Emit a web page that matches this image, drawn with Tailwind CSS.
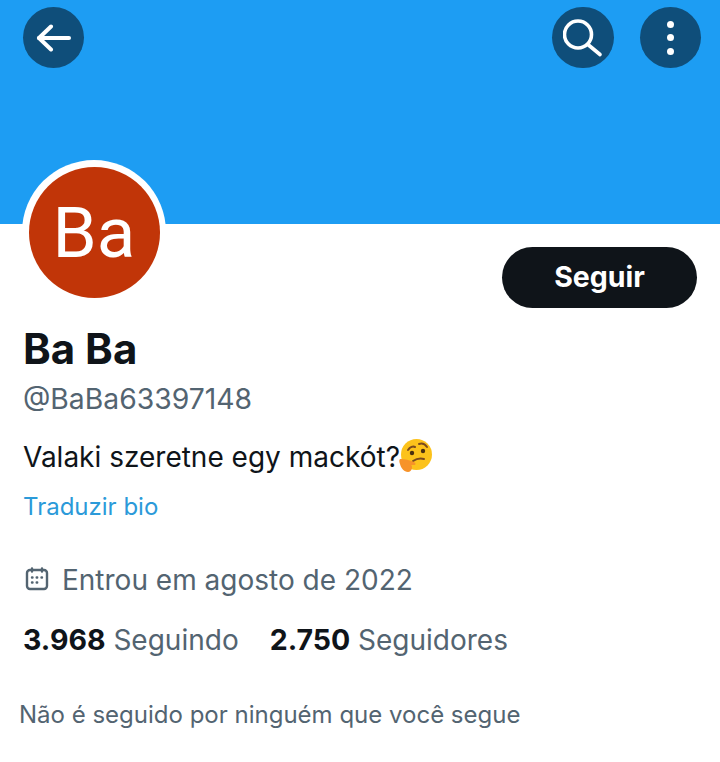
<!DOCTYPE html>
<html lang="pt">
<head>
<meta charset="UTF-8">
<title>Ba Ba (@BaBa63397148)</title>
<script src="https://cdn.jsdelivr.net/npm/@tailwindcss/browser@4"></script>
</head>
<body class="bg-white font-['Inter',sans-serif] h-[762px] w-[720px] overflow-hidden">

  <!-- banner -->
  <div class="bg-[#1d9df3] h-[224px] flex justify-between pl-[23px] pr-[19px] pt-[7px]">
    <div class="w-[61px] h-[61px] rounded-full bg-[#0f4e7a] flex items-center justify-center">
      <svg width="35" height="28" viewBox="0 0 35 28" fill="none" stroke="white" stroke-width="4" stroke-linecap="round" stroke-linejoin="round"><path d="M3 14h30"/><path d="M15 2.500 L3 14 L15 25.500" /></svg>
    </div>
    <div class="flex gap-[26px]">
      <div class="w-[62px] h-[61px] rounded-full bg-[#0f4e7a] flex items-center justify-center">
        <svg width="40" height="40" viewBox="0 0 40 40" fill="none" stroke="white" stroke-width="3.600" stroke-linecap="round"><circle cx="15" cy="16.500" r="13.500"/><path d="M25.500 27 L37 36.500"/></svg>
      </div>
      <div class="w-[61px] h-[61px] rounded-full bg-[#0f4e7a] flex flex-col items-center justify-center gap-[6.5px]">
        <span class="w-[7px] h-[7px] rounded-full bg-white"></span>
        <span class="w-[7px] h-[7px] rounded-full bg-white"></span>
        <span class="w-[7px] h-[7px] rounded-full bg-white"></span>
      </div>
    </div>
  </div>

  <!-- avatar + follow -->
  <div class="flex justify-between pl-[22px] pr-[23px] h-[80px]">
    <div class="-mt-[64px] w-[144px] h-[144px] rounded-full bg-white flex items-center justify-center shrink-0">
      <div class="w-[131px] h-[131px] rounded-full bg-[#c13508] flex items-center justify-center text-white text-[71px] leading-none font-['Roboto',sans-serif]">Ba</div>
    </div>
    <button class="mt-[23px] w-[195px] h-[61px] rounded-full bg-[#0f1419] text-white text-[28.5px] font-bold">Seguir</button>
  </div>

  <!-- profile text -->
  <div class="pl-[23px]">
    <h1 class="mt-[22px] text-[42px] leading-[46px] font-bold text-[#0f1419]">Ba Ba</h1>
    <p class="mt-[9px] text-[28.3px] leading-[36px] text-[#536471]">@BaBa63397148</p>
    <p class="mt-[22px] text-[28px] leading-[36px] text-[#0f1419] flex items-center">Valaki szeretne egy mackót?
      <svg class="-ml-[1px] -mt-[2px]" width="34" height="34" viewBox="0 0 34 34">
        <circle cx="17.500" cy="15.500" r="15.500" fill="#fcc21b"/>
        <path d="M9 11c2-3 5-4 7-3M20 5c3-1 6 0 8 3" fill="none" stroke="#7a4a1e" stroke-width="2" stroke-linecap="round"/>
        <circle cx="13" cy="14" r="2.200" fill="#4a2f10"/><circle cx="24" cy="12" r="2.200" fill="#4a2f10"/>
        <path d="M14 22c3-2 7-3 11-2" fill="none" stroke="#7a4a1e" stroke-width="2" stroke-linecap="round"/>
        <path d="M2 20c4 0 8 1 13 3 2 1 2 3 0 3l-3 0c2 1 1 7-3 7-4 0-7-4-8-8-1-3-1-5 1-5z" fill="#f79329"/>
      </svg>
    </p>
    <p class="mt-[16px] text-[24px] leading-[32px] text-[#2b9ad9]">Traduzir bio</p>
    <div class="mt-[39px] flex items-center gap-[13px] text-[28px] leading-[36px] text-[#536471]">
      <svg width="26" height="26" viewBox="0 0 26 26" fill="none" stroke="#536471" stroke-width="2.400" stroke-linecap="round" stroke-linejoin="round">
        <rect x="4" y="3" width="20" height="19" rx="3"/>
        <path d="M9 1.500v3M19 1.500v3"/>
        <path d="M9 10.500h.5M13.700 10.500h.5M18.500 10.500h.5M9 15.500h.5M13.700 15.500h.5" stroke-width="2.400"/>
      </svg>
      <span>Entrou em agosto de 2022</span>
    </div>
    <div class="mt-[24px] flex gap-[31px] text-[28px] leading-[36px] text-[#536471]">
      <span><b class="font-bold text-[28.5px] text-[#0f1419]">3.968</b> Seguindo</span>
      <span><b class="font-bold text-[28.5px] text-[#0f1419]">2.750</b> Seguidores</span>
    </div>
    <p class="mt-[41px] -ml-[4px] text-[24px] leading-[32px] text-[#536471]">Não é seguido por ninguém que você segue</p>
  </div>
</body>
</html>
